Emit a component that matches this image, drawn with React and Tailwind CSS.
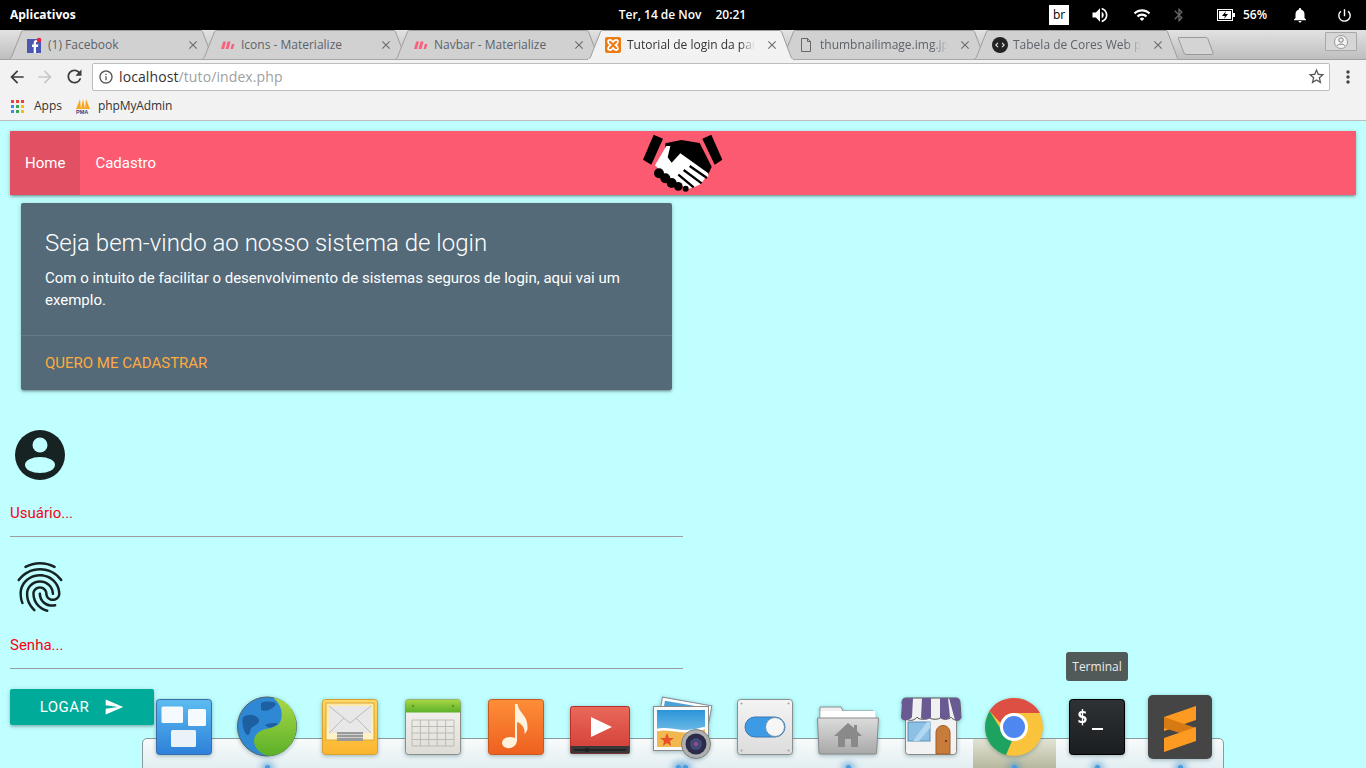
import React from "react";
import { MdArrowBack, MdArrowForward, MdRefresh, MdInfoOutline, MdStarBorder, MdMoreVert, MdVolumeUp, MdWifi, MdBluetooth, MdNotifications, MdPowerSettingsNew, MdFingerprint, MdSend, MdClose } from "react-icons/md";

const sans = "font-['Open_Sans',sans-serif]";
const roboto = "font-['Roboto',sans-serif]";

function FbIcon() {
  return (
    <svg width="16" height="16" viewBox="0 0 16 16" className="shrink-0">
      <rect x="1" y="2" width="14" height="14" fill="#4a57b0" />
      <path d="M10 16V10h2l.4-2.4H10V6.2c0-.7.3-1.1 1.1-1.1h1.3V3h-1.9C8.700 3 7.700 4.100 7.700 5.900v1.700H6V10h1.700v6z" fill="#fff" />
      <circle cx="13" cy="3" r="2.300" fill="#f0203a" />
    </svg>
  );
}
function MatIcon() {
  return (
    <svg width="14" height="14" viewBox="0 0 14 14" className="shrink-0">
      <path d="M0 11 2.200 3.500H5L3 11zM4.500 11l2.200-7.500h2.800L7.500 11zM9.500 11l1.400-5h2.500l-1.400 5z" fill="#fb5f7c" />
    </svg>
  );
}
function XamppIcon() {
  return (
    <svg width="16" height="16" viewBox="0 0 16 16" className="shrink-0">
      <rect x="0" y="0" width="16" height="16" rx="2" fill="#ee7a14" />
      <path d="M3 4.500C3 3 5 2.500 6.500 3.500L8 5l1.500-1.500C11 2.500 13 3 13 4.500S12 7 10.500 8C12 9 13 10 13 11.500s-2 2-3.500 1L8 11l-1.500 1.500c-1.500 1-3.500.5-3.500-1S4 9 5.500 8C4 7 3 6 3 4.500z" fill="none" stroke="#fff" strokeWidth="1.700" />
    </svg>
  );
}
function FileIcon() {
  return (
    <svg width="12" height="16" viewBox="0 0 12 16" className="shrink-0">
      <path d="M1.500 1.500h6l3 3v10h-9z M7.500 1.500v3h3" fill="none" stroke="#666" strokeWidth="1" />
    </svg>
  );
}
function CodeIcon() {
  return (
    <svg width="16" height="16" viewBox="0 0 16 16" className="shrink-0">
      <circle cx="8" cy="8" r="8" fill="#222" />
      <path d="M6 5.800 3.800 8 6 10.200M10 5.800 12.200 8 10 10.200" fill="none" stroke="#ddd" strokeWidth="1.200" />
    </svg>
  );
}

function Tab({ icon, title, active, gap = "gap-[7px]", pad = "pl-[19px]", fade }) {
  return (
    <div className="relative w-[207px] h-[30px] -mr-[14px] shrink-0" style={{ zIndex: active ? 5 : 1 }}>
      <svg width="207" height="30" viewBox="0 0 207 30" className="absolute inset-0">
        <path d="M0 29.500C2 29.500 3 28 3.500 27L13 3C13.500 1.500 14 .5 15.500 .5H193C194 .5 194.500 1.500 195 3L204 27C204.500 28 205 29.500 207 29.500" fill={active ? "#f2f2f2" : "#d1d1d1"} stroke="#9e9e9e" strokeWidth="1" />
        {active ? <rect x="1" y="29" width="205" height="1" fill="#f2f2f2" /> : <rect x="0" y="29" width="207" height="1" fill="#a8a8a8" />}
      </svg>
      <div className={`relative flex items-center h-full ${pad} ${gap}`}>
        {icon}
        <div className={`${sans} text-[12px] whitespace-nowrap w-[128px] ${active ? "text-[#333]" : "text-[#5c636b]"} ${fade ? "overflow-hidden [mask-image:linear-gradient(to_right,black_88%,transparent)]" : ""}`}>{title}</div>
      </div>
      <MdClose className="absolute left-[178px] top-[8px] text-[#6e6e6e]" size={14} />
    </div>
  );
}

function TopBar() {
  return (
    <div className={`${sans} h-[30px] bg-black text-white text-[12px] font-semibold flex items-center relative`}>
      <div className="pl-[10px] flex-1 font-bold">Aplicativos</div>
      <div className="flex gap-[14px] pl-[2px]"><span>Ter, 14 de Nov</span><span>20:21</span></div>
      <div className="flex-1 flex items-center justify-end pr-[13px]">
        <div className="w-[20px] h-[20px] bg-white text-black flex items-center justify-center text-[12px] font-normal">br</div>
        <MdVolumeUp size={20} className="ml-[21px]" />
        <MdWifi size={18} className="ml-[23px]" />
        <MdBluetooth size={16} className="ml-[20px] text-[#666]" />
        <svg width="18" height="12" viewBox="0 0 18 12" className="ml-[30px]">
          <rect x=".5" y=".5" width="15" height="11" fill="none" stroke="#fff" />
          <rect x="16" y="4" width="2" height="4" fill="#fff" />
          <path d="M2 2h12v8H2z" fill="#fff" />
          <path d="M9 2 5 7h3l-1 3 4-5H8z" fill="#000" />
        </svg>
        <span className="ml-[8px] w-[25px]">56%</span>
        <MdNotifications size={18} className="ml-[23px]" />
        <MdPowerSettingsNew size={17} className="ml-[27px]" />
      </div>
    </div>
  );
}

function TabStrip() {
  return (
    <div className="relative h-[30px] bg-gradient-to-b from-[#e2e2e2] to-[#bdbdbd] flex pl-[8px]">
      <div className="absolute left-0 right-0 bottom-0 h-px bg-[#a0a0a0]" />
      <Tab icon={<FbIcon />} title="(1) Facebook" pad="pl-[18px]" gap="gap-[6px]" />
      <Tab icon={<MatIcon />} title="Icons - Materialize" pad="pl-[20px]" gap="gap-[6px]" />
      <Tab icon={<MatIcon />} title="Navbar - Materialize" pad="pl-[20px]" gap="gap-[6px]" />
      <Tab icon={<XamppIcon />} title="Tutorial de login da pane" active fade pad="pl-[18px]" gap="gap-[6px]" />
      <Tab icon={<FileIcon />} title="thumbnailimage.img.jpg" fade pad="pl-[20px]" gap="gap-[8px]" />
      <Tab icon={<CodeIcon />} title="Tabela de Cores Web para" fade pad="pl-[19px]" gap="gap-[5px]" />
      <svg width="36" height="18" viewBox="0 0 36 18" className="mt-[7px] ml-[12px] shrink-0">
        <path d="M1 .5H28C29 .5 29.500 1 30 2L35 16C35.500 17 35 17.500 34 17.500H8C7 17.500 6.500 17 6 16L.5 2C0 1 0 .5 1 .5z" fill="#d4d4d4" stroke="#9a9a9a" />
      </svg>
      <div className="ml-auto mr-[9px] mt-[2px] w-[32px] h-[19px] border border-[#a8a8a8] bg-[#d6d6d6] rounded-[1px] flex items-center justify-center">
        <svg width="14" height="14" viewBox="0 0 14 14">
          <circle cx="7" cy="7" r="6.500" fill="#f4f4f4" stroke="#999" />
          <circle cx="7" cy="5" r="2.200" fill="none" stroke="#777" />
          <path d="M3 11c1-2.500 7-2.500 8 0" fill="none" stroke="#777" />
        </svg>
      </div>
    </div>
  );
}

function Toolbar() {
  return (
    <div className="h-[33px] bg-[#f2f2f2] flex items-center">
      <MdArrowBack size={20} className="ml-[7px] text-[#3c3c3c]" />
      <MdArrowForward size={20} className="ml-[8px] text-[#c8c8c8]" />
      <MdRefresh size={21} className="ml-[9px] text-[#3c3c3c]" />
      <div className="ml-[7px] w-[1238px] h-[28px] bg-white border border-[#bdbdbd] rounded-[2px] flex items-center">
        <MdInfoOutline size={16} className="ml-[5px] text-[#555]" />
        <span className={`${sans} ml-[5px] text-[14px] tracking-[0.1px] text-[#333]`}>localhost<span className="text-[#a0a0a0]">/tuto/index.php</span></span>
        <MdStarBorder size={19} className="ml-auto mr-[3px] text-[#555]" />
      </div>
      <MdMoreVert size={20} className="ml-[8px] text-[#444]" />
    </div>
  );
}

function Bookmarks() {
  const colors = ["#ea4335", "#ea4335", "#ea4335", "#4285f4", "#34a853", "#fbbc05", "#4285f4", "#34a853", "#fbbc05"];
  return (
    <div className={`${sans} h-[28px] pb-[1px] bg-[#f2f2f2] border-b border-[#bdbdbd] flex items-center text-[12px] text-[#333]`}>
      <div className="ml-[11px] grid grid-cols-3 gap-[2px] w-[13px]">
        {colors.map((c, i) => <div key={i} className="w-[3px] h-[3px]" style={{ backgroundColor: c }} />)}
      </div>
      <span className="ml-[10px]">Apps</span>
      <svg width="16" height="16" viewBox="0 0 16 16" className="ml-[13px]">
        <path d="M1 11 5 1l1 10zM6 11l2-10 2 10zM10 11l1-10 4 10z" fill="#f6a623" />
        <text x="1" y="16" fontSize="5.500" fontWeight="700" fill="#3a3a80" fontFamily="Liberation Sans">PMA</text>
      </svg>
      <span className="ml-[7px] tracking-[-0.1px]">phpMyAdmin</span>
    </div>
  );
}

function Handshake() {
  return (
    <svg width="80" height="60" viewBox="130 25 240 180" className="absolute left-1/2 -translate-x-1/2 top-[2px]">
      <path d="M162 30 190 42 155 120 130 105zM308 42 335 30 368 105 345 120z" fill="#000" />
      <path d="M197 56 245 46 300 55 336 126 322 158 250 110 215 130 196 110z" fill="#000" />
      <path d="M166 122 200 64 212 64 204 98 216 114 242 86 326 146 326 156 316 160 304 178 286 186 264 194 210 165z" fill="#fff" />
      <path d="M252 136 306 176M270 124 322 160M236 150 282 188" stroke="#000" strokeWidth="7" fill="none" />
      <g fill="#000">
        <circle cx="178" cy="146" r="15" /><circle cx="197" cy="161" r="15" /><circle cx="216" cy="175" r="15" /><circle cx="236" cy="185" r="13" /><circle cx="258" cy="192" r="9" />
      </g>
    </svg>
  );
}

const cardShadow = "shadow-[0_2px_2px_0_rgba(0,0,0,0.14),0_3px_1px_-2px_rgba(0,0,0,0.12),0_1px_5px_0_rgba(0,0,0,0.2)]";

function Navbar() {
  return (
    <nav className={`${roboto} ${cardShadow} relative h-[64px] bg-[#fc5a70] flex text-white text-[15px]`}>
      <a className="px-[15px] flex items-center bg-black/10">Home</a>
      <a className="px-[15px] flex items-center">Cadastro</a>
      <Handshake />
    </nav>
  );
}

function Card() {
  return (
    <div className={`${roboto} ${cardShadow} ml-[11px] mt-[8px] w-[651px] h-[187px] rounded-[2px] bg-[#546a79] flex flex-col`}>
      <div className="p-[24px] pb-0 h-[133px] text-white border-b border-white/10">
        <div className="text-[24px] font-light leading-[32px]">Seja bem-vindo ao nosso sistema de login</div>
        <p className="text-[15px] leading-[22px] mt-[8px]">Com o intuito de facilitar o desenvolvimento de sistemas seguros de login, aqui vai um exemplo.</p>
      </div>
      <div className="px-[24px] flex-1 flex items-center text-[15px] text-[#ffab40] uppercase">Quero me cadastrar</div>
    </div>
  );
}

function AccountIcon() {
  return (
    <svg width="60" height="60" viewBox="0 0 24 24" className="block">
      <circle cx="12" cy="12" r="10" fill="#172222" />
      <circle cx="12" cy="8" r="3" fill="#c0ffff" />
      <ellipse cx="12" cy="16" rx="6" ry="3.200" fill="#c0ffff" />
    </svg>
  );
}

function Field({ icon, label, mt }) {
  return (
    <div className={mt}>
      {icon}
      <div className="mt-[17px] w-[673px] h-[35px] border-b border-[#9e9e9e] text-[15px] text-[#f80010] leading-[22px]">{label}</div>
    </div>
  );
}

function Page() {
  return (
    <div className={`${roboto} h-[647px] bg-[#c0ffff] px-[10px] pt-[10px] overflow-hidden`}>
      <Navbar />
      <Card />
      <Field mt="mt-[35px]" icon={<AccountIcon />} label="Usuário..." />
      <Field mt="mt-[20px]" icon={<MdFingerprint size={60} className="block text-[#172222]" />} label="Senha..." />
      <button className="mt-[20px] w-[144px] h-[36px] bg-[#00ab9a] rounded-[2px] text-white text-[15px] tracking-[0.5px] flex items-center justify-center gap-[15px] shadow-[0_2px_2px_0_rgba(0,0,0,0.14),0_1px_5px_0_rgba(0,0,0,0.2)]">
        LOGAR <MdSend size={20} />
      </button>
    </div>
  );
}

const I = ({ children }) => <svg width="64" height="64" viewBox="0 0 64 64" className="block overflow-visible">{children}</svg>;

const Defs = () => (
  <svg width="0" height="0" className="absolute">
    <defs>
      <linearGradient id="gBlue" x1="0" y1="0" x2="0" y2="1"><stop offset="0" stopColor="#5cbcf0" /><stop offset="1" stopColor="#2e80da" /></linearGradient>
      <linearGradient id="gGreen" x1="0" y1="0" x2="0" y2="1"><stop offset="0" stopColor="#a8d848" /><stop offset="1" stopColor="#5cb028" /></linearGradient>
      <linearGradient id="gYellow" x1="0" y1="0" x2="0" y2="1"><stop offset="0" stopColor="#ffd766" /><stop offset="1" stopColor="#fbb52e" /></linearGradient>
      <linearGradient id="gCal" x1="0" y1="0" x2="0" y2="1"><stop offset="0" stopColor="#f6f5f2" /><stop offset="1" stopColor="#dddcd6" /></linearGradient>
      <linearGradient id="gOrange" x1="0" y1="0" x2="0" y2="1"><stop offset="0" stopColor="#fd8e38" /><stop offset="1" stopColor="#ee6020" /></linearGradient>
      <linearGradient id="gRed" x1="0" y1="0" x2="0" y2="1"><stop offset="0" stopColor="#e96a5a" /><stop offset="1" stopColor="#d23c34" /></linearGradient>
      <linearGradient id="gSky" x1="0" y1="0" x2="0" y2="1"><stop offset="0" stopColor="#2a94d8" /><stop offset="1" stopColor="#9ed8f0" /></linearGradient>
      <linearGradient id="gGrey" x1="0" y1="0" x2="0" y2="1"><stop offset="0" stopColor="#f4f4f4" /><stop offset="1" stopColor="#dcdcdc" /></linearGradient>
      <linearGradient id="gFolder" x1="0" y1="0" x2="0" y2="1"><stop offset="0" stopColor="#dcdcdc" /><stop offset="1" stopColor="#a8a8a8" /></linearGradient>
      <linearGradient id="gTerm" x1="0" y1="0" x2="0" y2="1"><stop offset="0" stopColor="#2e3234" /><stop offset="1" stopColor="#1a1e20" /></linearGradient>
      <linearGradient id="gCream" x1="0" y1="0" x2="0" y2="1"><stop offset="0" stopColor="#ffe9a8" /><stop offset="1" stopColor="#fff3c8" /></linearGradient>
    </defs>
  </svg>
);

const dockIcons = [
  <I key="1">
    <rect x="4.500" y="4.500" width="55" height="55" rx="3" fill="url(#gBlue)" stroke="#3a6ea8" />
    <rect x="9.500" y="11.500" width="21.500" height="16.500" rx="1.500" fill="#f4fafd" />
    <rect x="36" y="14" width="18" height="17" rx="1.500" fill="#f4fafd" />
    <rect x="19" y="35" width="25" height="17" rx="1.500" fill="#eaf4f8" />
  </I>,
  <I key="2">
    <circle cx="32" cy="31.500" r="29.500" fill="#2e88d4" stroke="#50606a" />
    <path d="M8 22c6-3 10-3 14 0s2 7-3 9-3 8-6 9-7-12-5-18zM26 8c5-2 12-2 15 1-3 5-9 8-15 6zM30 30c4-2 10-3 13-1-5 4-9 5-13 1z" fill="#1d5fa0" />
    <path d="M38 2.700C54 5 61.500 18 61.500 31.500 61.500 50 46 61 34 61 20 58 14 44 24 37c5-4 14-3 20-8 4-5 5-18-6-26.300z" fill="url(#gGreen)" />
  </I>,
  <I key="3">
    <rect x="4.500" y="4.500" width="55" height="55" rx="3" fill="url(#gYellow)" stroke="#d8a030" />
    <rect x="8" y="8" width="48" height="37" fill="url(#gCream)" stroke="#d8a838" />
    <rect x="11" y="11" width="42" height="27" fill="#e8e8e8" />
    <path d="M11 11 32 28 53 11M11 38 26 23M53 38 38 23" fill="none" stroke="#bbb" />
    <rect x="19" y="37" width="26" height="9" fill="#9a9a9a" />
    <path d="M19 39.500h26M19 42.500h26" stroke="#d0d0d0" />
  </I>,
  <I key="4">
    <rect x="4.500" y="4.500" width="55" height="55" rx="3" fill="url(#gCal)" stroke="#8c8c88" />
    <path d="M4.500 17.500V7.500a3 3 0 0 1 3-3h49a3 3 0 0 1 3 3v10z" fill="url(#gGreen)" />
    <circle cx="12" cy="11" r="1.300" fill="#5e9a20" /><circle cx="52" cy="11" r="1.300" fill="#5e9a20" />
    <path d="M11 25h42v26H11zM11 31.500h42M11 38h42M11 44.500h42M19.400 25v26M27.800 25v26M36.200 25v26M44.600 25v26" fill="none" stroke="#bdbcb2" />
  </I>,
  <I key="5">
    <rect x="4.500" y="4.500" width="55" height="55" rx="3" fill="url(#gOrange)" stroke="#c85a20" />
    <path d="M31 9h2.500c1 9 11 11 10 25-1 3-2 4-3 5 1-7-4-11-7.500-12v18c0 6-6 9-10 8-5-1-6-5-4-8s8-4 12-2z" fill="#fff3dd" />
  </I>,
  <I key="6">
    <rect x="3.500" y="11.500" width="59" height="47" rx="2" fill="url(#gRed)" stroke="#b83028" />
    <rect x="3.500" y="51" width="59" height="7.500" fill="#383838" />
    <path d="M7 55h52" stroke="#1e1e1e" strokeWidth="1.500" />
    <circle cx="20" cy="55" r="2.300" fill="#222" />
    <path d="M24 22 45 32 24 42z" fill="#fff" />
  </I>,
  <I key="7">
    <g transform="rotate(10 32 30)"><rect x="8" y="6" width="50" height="44" fill="#fff" stroke="#889" /><rect x="11" y="9" width="44" height="36" fill="#4aa0d8" /></g>
    <rect x="3.500" y="11.500" width="55" height="44" fill="#f8f8f8" stroke="#8a8a8a" />
    <rect x="7" y="15" width="48" height="37" fill="url(#gSky)" />
    <path d="M7 36c14-4 22 6 48-2v18H7z" fill="#f2b850" />
    <path d="M7 35c14-4 22 6 48-2" fill="none" stroke="#fff" strokeWidth="2.500" />
    <path d="M17 38l2 5 5 0-4 3 1 5-4-3-4 3 1-5-4-3 5 0z" fill="#e8502a" />
    <circle cx="46" cy="49" r="14.500" fill="#b0b0b0" stroke="#808080" />
    <circle cx="46" cy="49" r="10.500" fill="#2a2c48" />
    <circle cx="46" cy="49" r="6" fill="#444a78" />
    <circle cx="46" cy="49" r="2" fill="#a04a90" />
  </I>,
  <I key="8">
    <rect x="4.500" y="4.500" width="55" height="55" rx="3" fill="url(#gGrey)" stroke="#8a9090" />
    <circle cx="8.500" cy="8.500" r="1" fill="#a0a0a0" /><circle cx="55.500" cy="8.500" r="1" fill="#a0a0a0" /><circle cx="8.500" cy="55.500" r="1" fill="#a0a0a0" /><circle cx="55.500" cy="55.500" r="1" fill="#a0a0a0" />
    <rect x="12" y="22" width="40" height="20" rx="10" fill="#3d9ae4" stroke="#3a78b0" />
    <circle cx="42" cy="32" r="9.500" fill="#f6f6f6" stroke="#6a90b0" />
  </I>,
  <I key="9">
    <path d="M4 12h21l2 4h30v12H4z" fill="#f0f0f0" stroke="#909090" />
    <rect x="4.500" y="16" width="55" height="8" fill="#fff" />
    <path d="M1.500 23h61l-2 35a1 1 0 0 1-1 1H4a1 1 0 0 1-1-1z" fill="url(#gFolder)" stroke="#8a8a8a" />
    <path d="M32 28 18 41h4v11h7v-8h6v8h7V41h4l-5-5v-6h-3v3z" fill="#8a8a8a" />
  </I>,
  <I key="10">
    <rect x="6.500" y="20" width="51" height="39.500" rx="3" fill="#f2f2f2" stroke="#888" />
    <rect x="9" y="27" width="22" height="19" fill="#8cc0e4" stroke="#5a90b8" />
    <path d="M14 46 28 27h3v6L20 46z" fill="#b0d8f0" />
    <path d="M37 59V38c0-10 14-10 14 0v21z" fill="#c87c3c" stroke="#a05c28" />
    <circle cx="47" cy="46" r="1" fill="#5a2c10" />
    <path d="M3 8c0-3 1-5 4-5h50c3 0 4 2 4 5l1 14c0 3-3 4-6 3s-4-3-4-3c-1 3-10 3-10 0-1 3-11 3-12 0-1 3-11 3-12 0 0 0-1 2-4 3s-7 0-7-3z" fill="#f0f0f0" stroke="#555" />
    <path d="M3 8c0-3 1-5 4-5h7l-1 19c0 0-1 2-4 3s-7 0-7-3zM23 3h9v19c-1 3-7 3-10 1zM41 3h8l2 19c-1 3-8 3-10 1zM50 3h7c3 0 4 2 4 5l1 14c0 3-3 4-6 3z" fill="#6a5a92" />
  </I>,
  <I key="11">
    <circle cx="32" cy="32" r="29" fill="#f9c33c" />
    <path d="M32 3c11 0 21 6 26 15H32a14 14 0 0 0-13.500 10L7.500 16C12.500 8 21.500 3 32 3z" fill="#dc4f42" />
    <path d="M7.500 16 20 36a14 14 0 0 0 10 9.800L24 60C11 56 3 45 3 32c0-6 2-11 4.500-16z" fill="#1da35f" />
    <circle cx="32" cy="32" r="14" fill="#fff" />
    <circle cx="32" cy="32" r="11" fill="#4f87f0" />
  </I>,
  <I key="12">
    <rect x="4.500" y="4.500" width="55" height="55" rx="3" fill="url(#gTerm)" stroke="#000" />
    <text x="12" y="28" fill="#fff" fontSize="18" fontWeight="700" fontFamily="DejaVu Sans Mono">$</text>
    <rect x="27" y="33" width="11" height="2" fill="#fff" />
  </I>,
  <I key="13">
    <rect x="0" y="0" width="64" height="64" rx="5" fill="#454545" />
    <path d="M48 11V25L16 36V22z" fill="#fd9a22" />
    <path d="M16 33 48 43V33L16 22z" fill="#d87a14" />
    <path d="M48 32V46L16 57V43z" fill="#fd9a22" />
  </I>,
];

const dots = [0, 1, 0, 0, 0, 0, 2, 0, 1, 0, 1, 1, 1];

function Dock() {
  return (
    <div className="absolute left-0 right-0 bottom-0 h-[73px]">
      <div className="absolute left-[142px] top-[43px] w-[1082px] h-[31px] rounded-t-[5px] border border-[#8a9a9a] bg-gradient-to-b from-[#f8fbfb] to-[#e2eef2] overflow-hidden">
        <div className="absolute left-[830px] top-0 w-[83px] h-full bg-gradient-to-b from-[#e2e4d4] to-[#b8b89e]" />
      </div>
      <div className="absolute left-[142.500px] top-0 flex">
        {dockIcons.map((ic, i) => (
          <div key={i} className="relative w-[83px] h-[73px] flex justify-center drop-shadow-[0_1px_2px_rgba(0,60,70,0.35)]">
            {ic}
            {dots[i] > 0 && (
              <div className="absolute bottom-[-2px] left-0 right-0 flex justify-center gap-[2px]">
                {Array.from({ length: dots[i] }).map((_, k) => (
                  <div key={k} className="w-[5px] h-[5px] rounded-full bg-[#4a9ae0] shadow-[0_0_7px_3px_rgba(90,170,240,0.6)]" />
                ))}
              </div>
            )}
          </div>
        ))}
      </div>
      <div className={`${sans} absolute left-[1066px] top-[-43px] w-[62px] h-[29px] rounded-[3px] bg-[#4f5a59] text-[#eaeaea] text-[12px] flex items-center justify-center`}>Terminal</div>
    </div>
  );
}

export default function App() {
  return (
    <div className="relative w-[1366px] h-[768px] overflow-hidden">
      <Defs />
      <TopBar />
      <TabStrip />
      <Toolbar />
      <Bookmarks />
      <Page />
      <Dock />
    </div>
  );
}
